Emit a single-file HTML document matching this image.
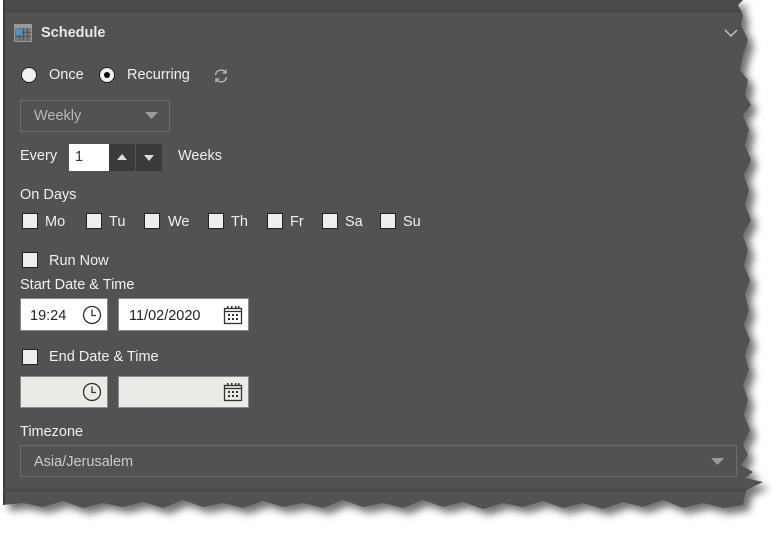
<!DOCTYPE html>
<html><head><style>
body{margin:0;width:781px;height:538px;background:#fff;position:relative;overflow:hidden;font-family:"Segoe UI","Liberation Sans",sans-serif;}
.wrap{position:absolute;left:0;top:0;width:781px;height:538px;filter:drop-shadow(6px 6px 4px rgba(0,0,0,.55));}
.panel{position:absolute;left:3px;top:0;width:760px;height:525px;background:#525252;
clip-path:polygon(0 0,740px 0,735px 5px,740px 15px,738px 25px,745px 40px,740px 55px,737px 70px,745px 80px,742px 95px,748px 105px,740px 115px,746px 130px,742px 145px,748px 160px,741px 175px,746px 190px,742px 205px,748px 220px,740px 235px,745px 250px,741px 265px,747px 280px,742px 295px,746px 310px,741px 325px,747px 340px,742px 355px,746px 370px,740px 385px,745px 400px,741px 415px,747px 430px,740px 445px,745px 455px,738px 465px,750px 472px,742px 478px,760px 482px,743px 490px,740px 505px,720px 508px,700px 503px,680px 508px,660px 500px,640px 507px,620px 502px,600px 509px,580px 503px,560px 508px,540px 501px,520px 507px,500px 503px,480px 509px,460px 502px,440px 507px,420px 500px,400px 508px,380px 503px,360px 507px,340px 500px,320px 508px,300px 503px,280px 507px,260px 501px,240px 508px,220px 503px,200px 507px,180px 500px,160px 508px,140px 502px,120px 507px,100px 503px,80px 508px,60px 501px,40px 507px,20px 503px,0 505px);}
.topstrip{position:absolute;left:0;top:0;width:760px;height:10px;background:#4a4a4a;border-bottom:2px solid #444;}
.leftline{position:absolute;left:0;top:0;width:2px;height:505px;background:#3c3c3c;}
.botline{position:absolute;left:0;top:488px;width:760px;height:4px;background:#4a4a4a;}
.t{position:absolute;color:#f0f0f0;font-size:14.5px;line-height:16px;white-space:nowrap;}
.radio{position:absolute;width:14px;height:14px;border-radius:50%;background:#f0f0f0;border:1px solid #222;}
.cb{position:absolute;width:14px;height:14px;background:#eee;border:1px solid #222;}
.box{position:absolute;background:#fff;border:1px solid #777;box-sizing:border-box;}
.dis{background:#ebebe5;}
</style></head><body>
<div class="wrap"><div class="panel">
<div class="topstrip"></div><div class="leftline"></div><div class="botline"></div>
</div></div>

<svg style="position:absolute;left:14px;top:24px" width="18" height="18" viewBox="0 0 18 18"><rect x="0.5" y="0.5" width="17" height="17" fill="#777" stroke="#999"/><rect x="1" y="1" width="16" height="3" fill="#9a9a9a"/><g stroke="#555"><path d="M1 8.5h16M1 12.5h16M5.5 4v13M9.5 4v13M13.5 4v13"/></g><rect x="2" y="5" width="6" height="6" fill="#3a9ad9"/></svg>
<div class="t" style="left:41px;top:25px;font-weight:bold;color:#e8e8e8">Schedule</div>
<svg style="position:absolute;left:724px;top:29px" width="14" height="9"><path d="M1 1l6 6 6-6" stroke="#ccc" stroke-width="1.3" fill="none"/></svg>

<div class="radio" style="left:21px;top:67px"></div>
<div class="t" style="left:49px;top:67px">Once</div>
<div class="radio" style="left:99px;top:67px"><div style="position:absolute;left:4px;top:4px;width:6px;height:6px;border-radius:50%;background:#000"></div></div>
<div class="t" style="left:127px;top:67px">Recurring</div>
<svg style="position:absolute;left:213px;top:68px" width="16" height="16" viewBox="0 0 16 16"><path d="M2.5 7A5.5 5.5 0 0 1 12.5 4.5M13.5 9A5.5 5.5 0 0 1 3.5 11.5" stroke="#bbb" stroke-width="1.3" fill="none"/><path d="M13 1.5v3.5h-3.5M3 14.5v-3.5h3.5" stroke="#bbb" stroke-width="1.3" fill="none"/></svg>

<div class="box" style="left:20px;top:100px;width:150px;height:32px;background:transparent;border-color:#6e6e6e"></div>
<div class="t" style="left:34px;top:108px;color:#b8b8b8">Weekly</div>
<svg style="position:absolute;left:145px;top:112px" width="13" height="7"><path d="M0 0h13L6.5 7z" fill="#9a9a9a"/></svg>

<div class="t" style="left:20px;top:148px">Every</div>
<div class="box" style="left:69px;top:144px;width:40px;height:27px;border:none"></div>
<div class="t" style="left:75px;top:149px;color:#333">1</div>
<div style="position:absolute;left:109px;top:144px;width:53px;height:27px;background:#3a3a3a"></div>
<div style="position:absolute;left:135px;top:144px;width:1px;height:27px;background:#555"></div>
<svg style="position:absolute;left:117px;top:154px" width="10" height="6"><path d="M0 6h10L5 0z" fill="#ddd"/></svg>
<svg style="position:absolute;left:144px;top:155px" width="10" height="6"><path d="M0 0h10L5 6z" fill="#ddd"/></svg>
<div class="t" style="left:178px;top:148px">Weeks</div>

<div class="t" style="left:20px;top:187px">On Days</div>
<div class="cb" style="left:22px;top:213px"></div><div class="t" style="left:45px;top:214px">Mo</div>
<div class="cb" style="left:86px;top:213px"></div><div class="t" style="left:109px;top:214px">Tu</div>
<div class="cb" style="left:144px;top:213px"></div><div class="t" style="left:168px;top:214px">We</div>
<div class="cb" style="left:208px;top:213px"></div><div class="t" style="left:231px;top:214px">Th</div>
<div class="cb" style="left:267px;top:213px"></div><div class="t" style="left:290px;top:214px">Fr</div>
<div class="cb" style="left:322px;top:213px"></div><div class="t" style="left:345px;top:214px">Sa</div>
<div class="cb" style="left:380px;top:213px"></div><div class="t" style="left:403px;top:214px">Su</div>

<div class="cb" style="left:22px;top:252px"></div><div class="t" style="left:49px;top:253px">Run Now</div>
<div class="t" style="left:20px;top:277px">Start Date &amp; Time</div>

<div class="box" style="left:20px;top:298px;width:88px;height:33px;border-color:#888"></div>
<div class="t" style="left:30px;top:308px;color:#222">19:24</div>
<svg style="position:absolute;left:82px;top:305px" width="20" height="20"><circle cx="10" cy="10" r="8.5" stroke="#333" stroke-width="1.3" fill="none"/><path d="M10 4.5V10.5H14" stroke="#333" stroke-width="1.3" fill="none"/></svg>
<div class="box" style="left:118px;top:298px;width:131px;height:33px;border-color:#888"></div>
<div class="t" style="left:129px;top:308px;color:#222">11/02/2020</div>
<svg style="position:absolute;left:223px;top:305px" width="20" height="20" viewBox="0 0 20 20"><rect x="1.5" y="3.5" width="17" height="15" fill="none" stroke="#333" stroke-width="1.3"/><path d="M1.5 6.5h17" stroke="#333" stroke-width="1.3"/><g fill="#333"><rect x="5" y="9" width="2" height="2"/><rect x="9" y="9" width="2" height="2"/><rect x="13" y="9" width="2" height="2"/><rect x="5" y="13" width="2" height="2"/><rect x="9" y="13" width="2" height="2"/><rect x="13" y="13" width="2" height="2"/><rect x="4" y="1" width="1.5" height="3"/><rect x="8" y="1" width="1.5" height="3"/><rect x="12" y="1" width="1.5" height="3"/><rect x="15" y="1" width="1.5" height="3"/></g></svg>

<div class="cb" style="left:22px;top:349px"></div><div class="t" style="left:49px;top:349px">End Date &amp; Time</div>
<div class="box dis" style="left:20px;top:376px;width:88px;height:32px;border-color:#888"></div>
<svg style="position:absolute;left:82px;top:382px" width="20" height="20"><circle cx="10" cy="10" r="8.5" stroke="#333" stroke-width="1.3" fill="none"/><path d="M10 4.5V10.5H14" stroke="#333" stroke-width="1.3" fill="none"/></svg>
<div class="box dis" style="left:118px;top:376px;width:131px;height:32px;border-color:#888"></div>
<svg style="position:absolute;left:223px;top:382px" width="20" height="20" viewBox="0 0 20 20"><rect x="1.5" y="3.5" width="17" height="15" fill="none" stroke="#333" stroke-width="1.3"/><path d="M1.5 6.5h17" stroke="#333" stroke-width="1.3"/><g fill="#333"><rect x="5" y="9" width="2" height="2"/><rect x="9" y="9" width="2" height="2"/><rect x="13" y="9" width="2" height="2"/><rect x="5" y="13" width="2" height="2"/><rect x="9" y="13" width="2" height="2"/><rect x="13" y="13" width="2" height="2"/><rect x="4" y="1" width="1.5" height="3"/><rect x="8" y="1" width="1.5" height="3"/><rect x="12" y="1" width="1.5" height="3"/><rect x="15" y="1" width="1.5" height="3"/></g></svg>

<div class="t" style="left:20px;top:424px">Timezone</div>
<div class="box" style="left:20px;top:445px;width:717px;height:32px;background:transparent;border-color:#6e6e6e"></div>
<div class="t" style="left:34px;top:454px;color:#ccc">Asia/Jerusalem</div>
<svg style="position:absolute;left:711px;top:458px" width="13" height="7"><path d="M0 0h13L6.5 7z" fill="#9a9a9a"/></svg>
</body></html>
